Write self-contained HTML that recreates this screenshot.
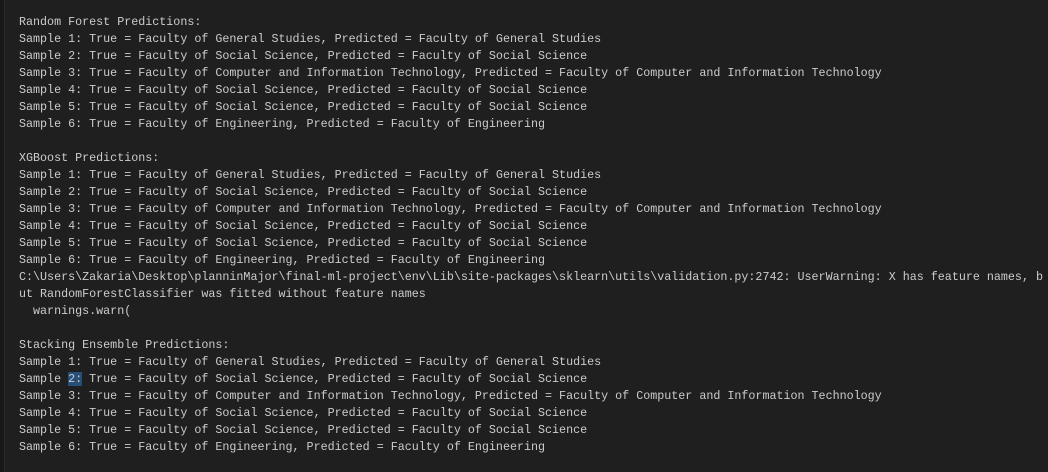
<!DOCTYPE html>
<html><head><style>
html,body{margin:0;padding:0;width:1048px;height:472px;background:#1f1f1f;overflow:hidden}
pre{position:absolute;left:19px;top:14px;margin:0;font-family:"Liberation Mono",monospace;font-size:11.7px;line-height:17px;color:#cccccc;white-space:pre}
.h{background:#264f78}
.b{position:absolute;left:0;top:0;width:4px;height:472px;background:#181818;border-right:1px solid #2b2b2b}
</style></head><body><div class="b"></div><pre>Random Forest Predictions:
Sample 1: True = Faculty of General Studies, Predicted = Faculty of General Studies
Sample 2: True = Faculty of Social Science, Predicted = Faculty of Social Science
Sample 3: True = Faculty of Computer and Information Technology, Predicted = Faculty of Computer and Information Technology
Sample 4: True = Faculty of Social Science, Predicted = Faculty of Social Science
Sample 5: True = Faculty of Social Science, Predicted = Faculty of Social Science
Sample 6: True = Faculty of Engineering, Predicted = Faculty of Engineering

XGBoost Predictions:
Sample 1: True = Faculty of General Studies, Predicted = Faculty of General Studies
Sample 2: True = Faculty of Social Science, Predicted = Faculty of Social Science
Sample 3: True = Faculty of Computer and Information Technology, Predicted = Faculty of Computer and Information Technology
Sample 4: True = Faculty of Social Science, Predicted = Faculty of Social Science
Sample 5: True = Faculty of Social Science, Predicted = Faculty of Social Science
Sample 6: True = Faculty of Engineering, Predicted = Faculty of Engineering
C:\Users\Zakaria\Desktop\planninMajor\final-ml-project\env\Lib\site-packages\sklearn\utils\validation.py:2742: UserWarning: X has feature names, b
ut RandomForestClassifier was fitted without feature names
  warnings.warn(

Stacking Ensemble Predictions:
Sample 1: True = Faculty of General Studies, Predicted = Faculty of General Studies
Sample <span class="h">2:</span> True = Faculty of Social Science, Predicted = Faculty of Social Science
Sample 3: True = Faculty of Computer and Information Technology, Predicted = Faculty of Computer and Information Technology
Sample 4: True = Faculty of Social Science, Predicted = Faculty of Social Science
Sample 5: True = Faculty of Social Science, Predicted = Faculty of Social Science
Sample 6: True = Faculty of Engineering, Predicted = Faculty of Engineering</pre></body></html>
